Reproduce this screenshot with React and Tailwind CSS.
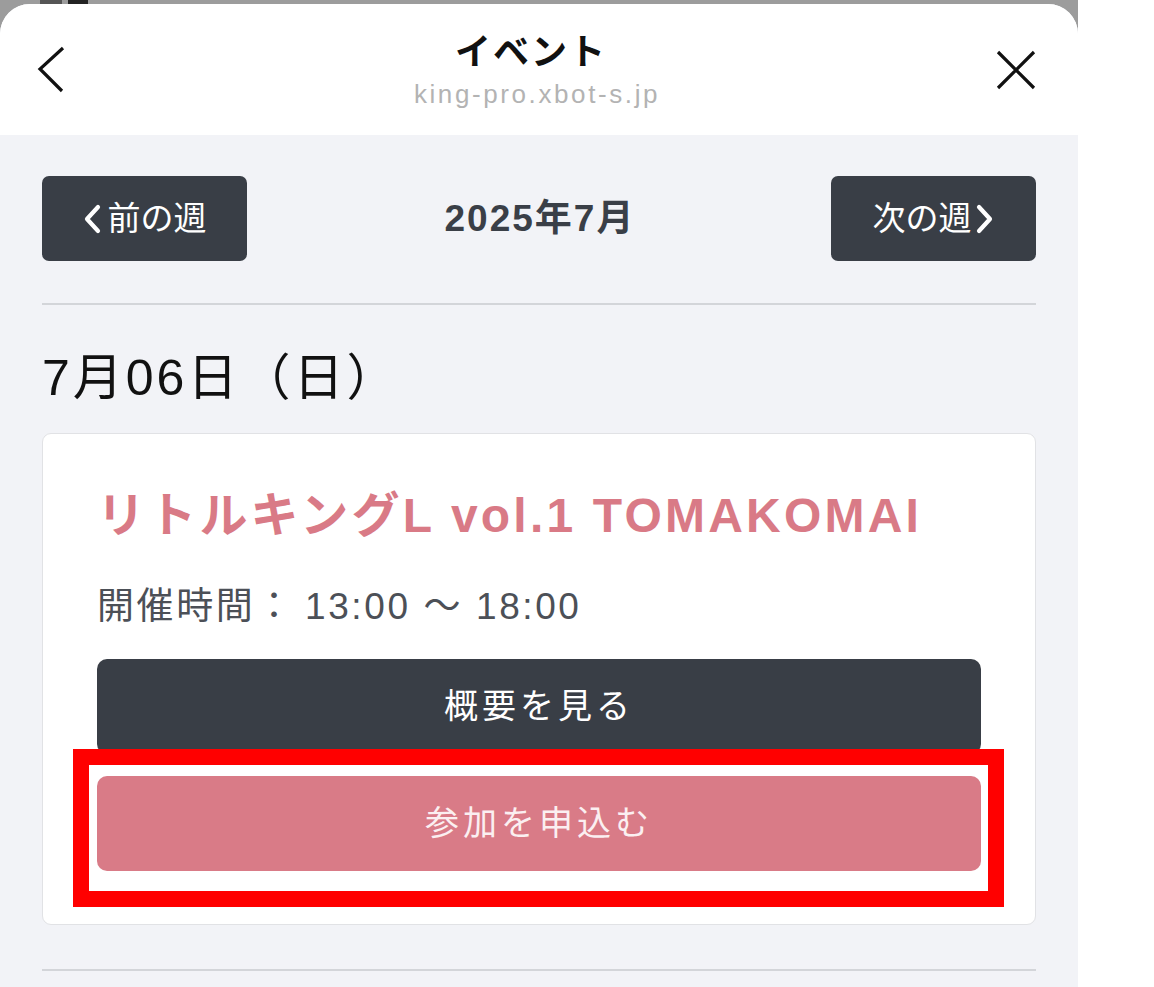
import React from "react";

const jp = { fontFamily: '"Liberation Sans", "Noto Sans CJK JP", sans-serif' };

function BackIcon() {
  return (
    <svg width="30" height="50" viewBox="0 0 30 50" fill="none">
      <path d="M26 3 L3 24 L25 46" stroke="#111" strokeWidth="3.2" strokeLinecap="butt" strokeLinejoin="miter" />
    </svg>
  );
}

function CloseIcon() {
  return (
    <svg width="42" height="42" viewBox="0 0 42 42" fill="none">
      <path d="M3 3 L39 39 M39 3 L3 39" stroke="#111" strokeWidth="3.2" />
    </svg>
  );
}

function Chevron({ dir }) {
  const d = dir === "left" ? "M15 3 L4 15 L15 27" : "M4 3 L15 15 L4 27";
  return (
    <svg width="19" height="30" viewBox="0 0 19 30" fill="none">
      <path d={d} stroke="#fff" strokeWidth="4.2" strokeLinecap="round" strokeLinejoin="round" />
    </svg>
  );
}

export default function App() {
  return (
    <div className="flex w-[1154px] h-[987px] bg-white overflow-hidden" style={jp}>
      <div className="w-[1078px] h-full bg-[#9c9c9c] pt-[4px] relative">
        {/* backdrop remnant */}
        <div className="absolute left-[40px] top-0 w-[22px] h-[4px] bg-[#555]" />
        <div className="absolute left-[68px] top-0 w-[20px] h-[4px] bg-[#222]" />
        <div className="h-full rounded-t-[30px] bg-[#f2f3f7] overflow-hidden flex flex-col">
          {/* header */}
          <div className="h-[131px] bg-white flex items-center justify-between pl-[37px] pr-[41px]">
            <BackIcon />
            <div className="flex flex-col items-center pt-[2px]">
              <div className="text-[36px] leading-[42px] font-bold text-[#111] tracking-[2px]">イベント</div>
              <div className="text-[26px] leading-[32px] text-[#b3b3b3] tracking-[2.6px] mt-[4px] pl-[12px]">king-pro.xbot-s.jp</div>
            </div>
            <CloseIcon />
          </div>

          {/* body */}
          <div className="px-[42px] pt-[41px]">
            <div className="flex items-center justify-between">
              <button className="w-[205px] h-[85px] rounded-[7px] bg-[#393e46] flex items-center justify-center gap-[6px] text-white text-[33px]">
                <Chevron dir="left" />
                <span>前の週</span>
              </button>
              <div className="text-[37px] font-bold text-[#3a3f47] tracking-[2px] pl-[2px]">2025年7月</div>
              <button className="w-[205px] h-[85px] rounded-[7px] bg-[#393e46] flex items-center justify-center gap-[4px] text-white text-[33px]">
                <span>次の週</span>
                <Chevron dir="right" />
              </button>
            </div>

            <div className="mt-[42px] h-[2px] bg-[#d3d5d9]" />

            <div className="mt-[44px] text-[50px] leading-[58px] text-[#111] tracking-[3px]">7月06日（日）</div>

            <div className="relative mt-[26px] bg-white border border-[#e1e2e5] rounded-[9px] px-[54px] pt-[54px] pb-[53px]">
              <div className="text-[48px] leading-[56px] font-bold text-[#d97a86] tracking-[3.2px] whitespace-nowrap">
                リトルキングL vol.1 TOMAKOMAI
              </div>
              <div className="mt-[42px] text-[37px] leading-[42px] text-[#4c5057] tracking-[2.6px]">
                開催時間：<span className="ml-[10px]">13:00 〜 18:00</span>
              </div>
              <button className="mt-[31px] w-full h-[95px] rounded-[10px] bg-[#393e46] text-white text-[34px] tracking-[4px]">
                概要を見る
              </button>
              <button className="mt-[22px] w-full h-[95px] rounded-[10px] bg-[#d97b87] text-[#fbeff1] text-[34px] tracking-[4px]">
                参加を申込む
              </button>
              <div className="absolute left-[30px] top-[315px] w-[931px] h-[158px] border-[16px] border-[#ff0000]" />
            </div>

            <div className="mt-[44px] h-[2px] bg-[#d3d5d9]" />
          </div>
        </div>
      </div>
    </div>
  );
}
